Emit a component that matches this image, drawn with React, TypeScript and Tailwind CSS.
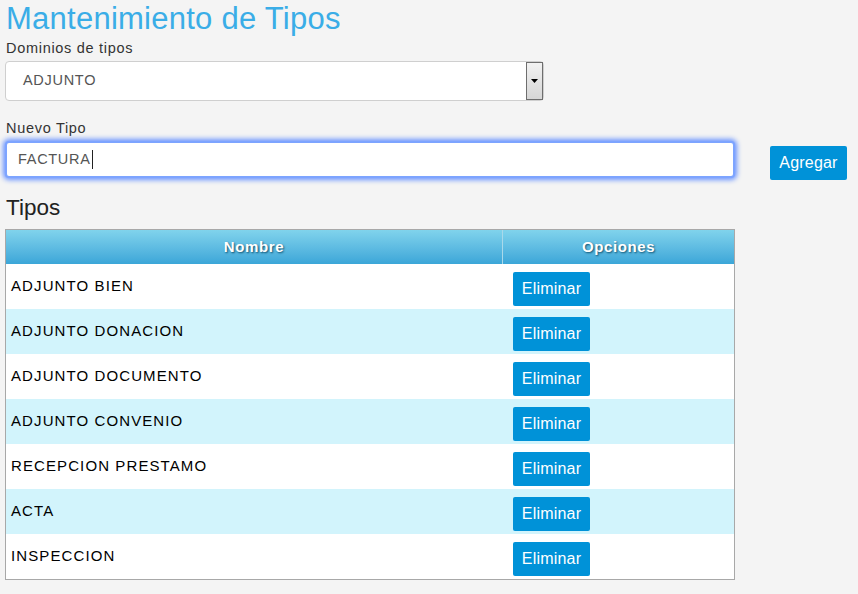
import React from "react";

const rows = [
  "ADJUNTO BIEN",
  "ADJUNTO DONACION",
  "ADJUNTO DOCUMENTO",
  "ADJUNTO CONVENIO",
  "RECEPCION PRESTAMO",
  "ACTA",
  "INSPECCION",
];

export default function App() {
  return (
    <div className="min-h-[594px] w-[858px] bg-[#f4f4f4] pl-[5px] font-['Liberation_Sans',Arial,sans-serif]">
      <h1 className="pl-[1px] pt-[1px] text-[31px] leading-[36px] tracking-[0.25px] text-[#3aade7]">
        Mantenimiento de Tipos
      </h1>
      <div className="mt-[1px] pl-[1px] text-[14.5px] leading-[20px] tracking-[0.7px] text-[#333]">
        Dominios de tipos
      </div>
      <div className="mt-[3px] flex h-[40px] w-[539px] items-center rounded-[4px] border border-[#cfcfcf] bg-white">
        <span className="flex-1 pl-[17px] text-[14.5px] tracking-[0.7px] text-[#555]">ADJUNTO</span>
        <div className="flex h-[38px] w-[17px] items-center justify-center border border-[#6e6e6e] bg-gradient-to-b from-[#f2f2f2] to-[#d6d6d6]">
          <svg width="7" height="4" viewBox="0 0 7 4">
            <polygon points="0,0 7,0 3.5,4" fill="#000" />
          </svg>
        </div>
      </div>
      <div className="mt-[17px] pl-[1px] text-[14.5px] leading-[20px] tracking-[0.7px] text-[#333]">
        Nuevo Tipo
      </div>
      <div className="mt-[1px] flex items-center">
        <div className="flex h-[37px] w-[730px] items-center rounded-[4px] border-2 border-[#7da4ff] bg-white shadow-[0_0_5px_2px_#6a94ff]">
          <span className="pl-[11px] text-[14.5px] tracking-[0.7px] text-[#555]">FACTURA</span>
          <span className="ml-[1px] h-[19px] w-[1px] bg-[#222]" />
        </div>
        <button className="ml-[35px] mt-[7px] h-[34px] w-[77px] rounded-[2px] bg-[#0092d8] text-[16px] tracking-[0.2px] text-white">
          Agregar
        </button>
      </div>
      <h2 className="mt-[15px] pl-[1px] text-[22.5px] leading-[26px] text-[#222]">Tipos</h2>
      <div className="mt-[8px] w-[730px] border border-[#a8a8a8]">
        <div className="flex h-[34px] bg-gradient-to-b from-[#80d3ec] to-[#3ba6d8] text-[15px] font-bold tracking-[0.6px] text-white [text-shadow:1px_1px_2px_#10506e]">
          <div className="flex w-[497px] items-center justify-center border-r border-[#a9d9ea]">Nombre</div>
          <div className="flex flex-1 items-center justify-center">Opciones</div>
        </div>
        {rows.map((r, i) => (
          <div key={r} className={`flex h-[45px] ${i % 2 === 1 ? "bg-[#d2f4fc]" : "bg-white"}`}>
            <div className="flex w-[497px] items-center pl-[5px] text-[15px] tracking-[1.1px] text-[#000]">{r}</div>
            <div className="flex-1 pl-[10px] pt-[8px]">
              <button className="h-[34px] w-[77px] rounded-[2px] bg-[#0092d8] text-[16px] tracking-[0.2px] text-white">
                Eliminar
              </button>
            </div>
          </div>
        ))}
      </div>
    </div>
  );
}
